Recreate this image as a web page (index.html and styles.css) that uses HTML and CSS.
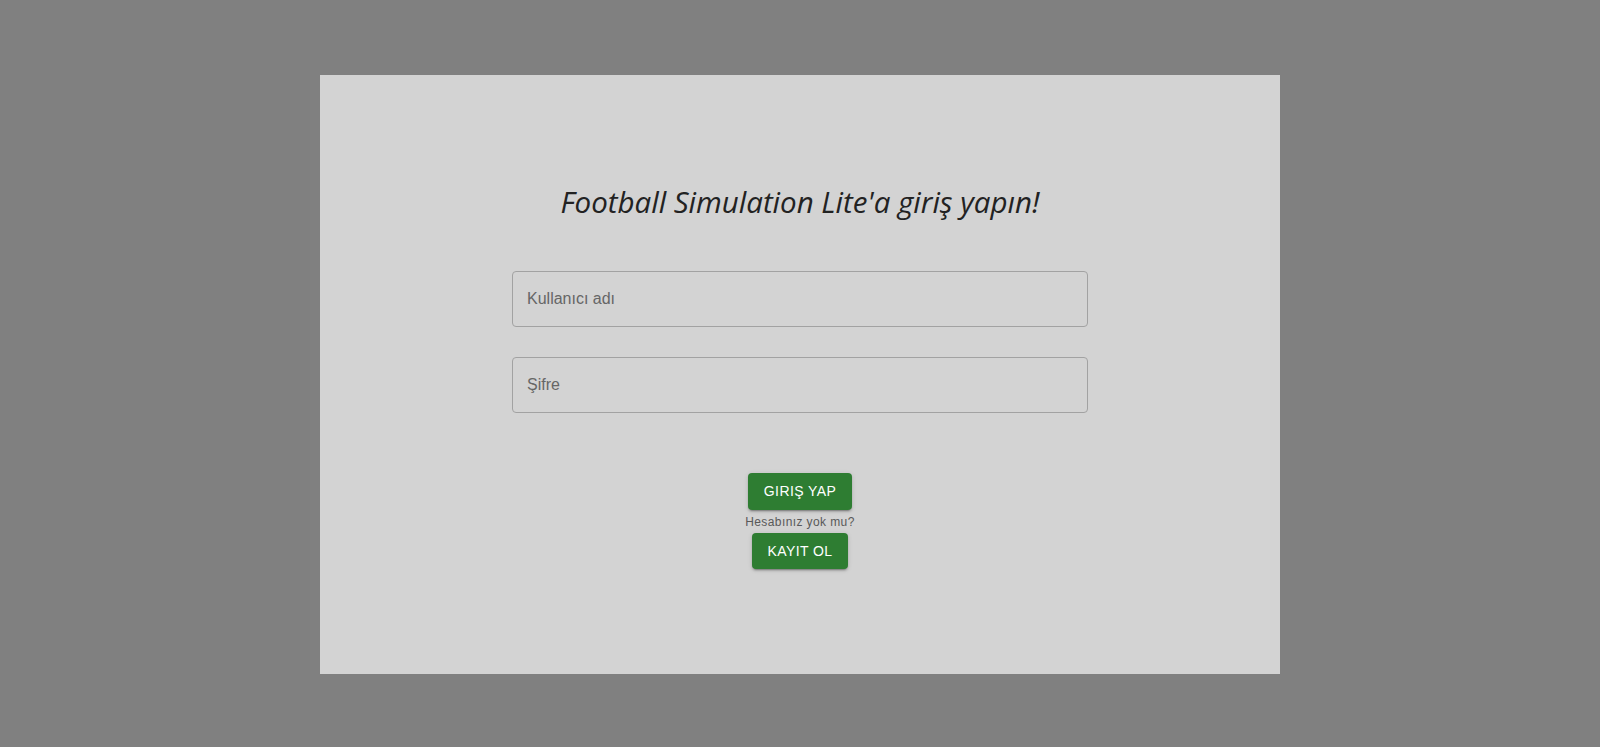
FILE: index.html
```html
<!DOCTYPE html>
<html lang="en">
<head>
<meta charset="utf-8">
<title>Football Simulation Lite</title>
<link rel="stylesheet" href="styles.css">
</head>
<body>
<div class="card">
  <h1 class="title">Football Simulation Lite'a giriş yapın!</h1>
  <form class="form">
    <div class="field"><input class="input" type="text" placeholder="Kullanıcı adı"></div>
    <div class="field"><input class="input" type="password" placeholder="Şifre"></div>
    <div class="actions">
      <button class="btn" type="button">GIRIŞ YAP</button>
      <span class="caption">Hesabınız yok mu?</span>
      <button class="btn" type="button">KAYIT OL</button>
    </div>
  </form>
</div>
</body>
</html>
```
FILE: styles.css
```css
* { box-sizing: border-box; }
html, body { margin: 0; padding: 0; }
body {
  background: #808080;
  height: 100vh;
  display: flex;
  align-items: flex-start;
  justify-content: center;
  padding-top: 75px;
  font-family: "Liberation Sans", Arial, sans-serif;
}
.card {
  width: 960px;
  height: 599px;
  background: #d3d3d3;
  padding-top: 107px;
  display: flex;
  flex-direction: column;
  align-items: center;
}
.title {
  margin: 0;
  font-family: "Open Sans", sans-serif;
  font-style: italic;
  font-weight: 400;
  font-size: 29.5px;
  line-height: 40px;
  color: #222;
}
.form {
  width: 576px;
  margin-top: 49px;
  display: flex;
  flex-direction: column;
}
.field { margin-bottom: 30px; }
.field + .field { margin-bottom: 60px; }
.input {
  display: block;
  width: 100%;
  height: 56px;
  padding: 16.5px 14px;
  border: 1px solid #a2a2a2;
  border-radius: 4px;
  background: transparent;
  font-family: "Liberation Sans", Arial, sans-serif;
  font-size: 16px;
  color: #222;
  outline: none;
}
.input::placeholder { color: #666; opacity: 1; }
.actions {
  display: flex;
  flex-direction: column;
  align-items: center;
}
.btn {
  background: #2e7d32;
  color: #fff;
  border: 0;
  border-radius: 4px;
  padding: 6px 16px;
  font-family: "Liberation Sans", Arial, sans-serif;
  font-size: 14px;
  font-weight: 500;
  line-height: 24.5px;
  letter-spacing: 0.02857em;
  box-shadow: 0 3px 1px -2px rgba(0,0,0,0.2), 0 2px 2px 0 rgba(0,0,0,0.14), 0 1px 5px 0 rgba(0,0,0,0.12);
  cursor: pointer;
}
.caption {
  font-size: 12px;
  line-height: 20px;
  letter-spacing: 0.03333em;
  color: #595959;
  padding-top: 2px;
  margin-bottom: 1px;
}
```
